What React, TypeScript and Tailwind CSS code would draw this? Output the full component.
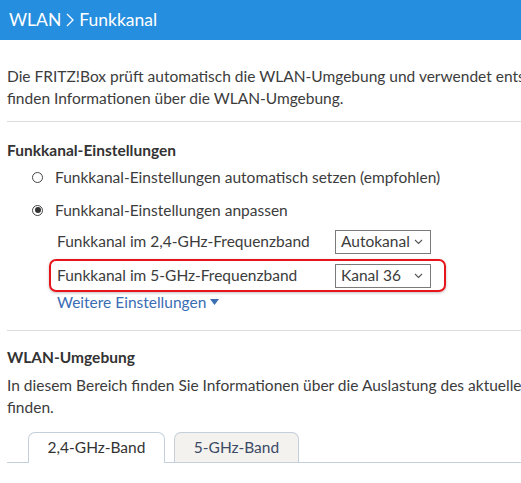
import React from "react";

const font = { fontFamily: "Lato, 'Liberation Sans', sans-serif" };

function Chevron() {
  return (
    <svg width="9" height="6" viewBox="0 0 9 6" className="flex-shrink-0">
      <polyline points="1,1 4.5,4.5 8,1" fill="none" stroke="#555" strokeWidth="1.1" />
    </svg>
  );
}

function Select({ value }: { value: string }) {
  return (
    <div className="w-[96px] h-[24px] border border-[#7a7a7a] bg-white flex items-center justify-between pl-[5px] pr-[7px] text-[15.5px] text-[#3c3c3c]">
      <span>{value}</span>
      <Chevron />
    </div>
  );
}

function Radio({ checked }: { checked?: boolean }) {
  return (
    <span className="w-[11px] h-[11px] rounded-full border border-[#444] flex items-center justify-center flex-shrink-0">
      {checked && <span className="w-[6px] h-[6px] rounded-full bg-[#333]" />}
    </span>
  );
}

export default function App() {
  return (
    <div className="w-[521px] h-[483px] overflow-hidden bg-white text-[#3c3c3c] text-[15.5px]" style={font}>
      {/* Title bar */}
      <div className="h-10 bg-[#268ede] flex items-center pl-[9px] gap-[5px] text-white text-[17.5px]">
        <span>WLAN</span>
        <svg width="8" height="14" viewBox="0 0 8 14">
          <polyline points="1,1 7,7 1,13" fill="none" stroke="white" strokeWidth="1.3" />
        </svg>
        <span>Funkkanal</span>
      </div>

      <div className="pl-[7px]">
        <div className="mt-[25px] leading-[22px] whitespace-nowrap">
          <p>Die FRITZ!Box prüft automatisch die WLAN-Umgebung und verwendet entsprechend einen geeigneten Funkkanal. Hier</p>
          <p>finden Informationen über die WLAN-Umgebung.</p>
        </div>

        <div className="mt-[12px] border-t border-[#dddddd]" />

        {/* Funkkanal-Einstellungen */}
        <h2 className="mt-[17px] leading-[22px] font-bold text-[#333]">Funkkanal-Einstellungen</h2>

        <div className="mt-[5px] pl-[25px] flex items-center gap-[12px] leading-[22px]">
          <Radio />
          <span>Funkkanal-Einstellungen automatisch setzen (empfohlen)</span>
        </div>
        <div className="mt-[11px] pl-[25px] flex items-center gap-[12px] leading-[22px]">
          <Radio checked />
          <span>Funkkanal-Einstellungen anpassen</span>
        </div>

        <div className="mt-[4px] ml-[42px] w-[397px] border-2 border-transparent rounded-[7px] flex items-center pl-[6px] pt-[3px] pb-[2px]">
          <span className="w-[278px]">Funkkanal im 2,4-GHz-Frequenzband</span>
          <Select value="Autokanal" />
        </div>
        <div className="mt-[1px] ml-[42px] w-[397px] border-2 border-[#e8141b] rounded-[7px] flex items-center pl-[6px] pt-[3px] pb-[2px] shadow-[0_1px_3px_rgba(0,0,0,0.25)]">
          <span className="w-[278px]">Funkkanal im 5-GHz-Frequenzband</span>
          <Select value="Kanal 36" />
        </div>

        <div className="ml-[50px] leading-[20px] text-[#3b6db3] flex items-center gap-[4px]">
          <span>Weitere Einstellungen</span>
          <svg width="9" height="6" viewBox="0 0 9 6">
            <polygon points="0,0 9,0 4.5,6" fill="#3b6db3" />
          </svg>
        </div>

        <div className="mt-[18px] border-t border-[#dddddd]" />

        {/* WLAN-Umgebung */}
        <h2 className="mt-[15px] leading-[22px] font-bold text-[#333]">WLAN-Umgebung</h2>
        <div className="mt-[6px] leading-[22px] whitespace-nowrap">
          <p>In diesem Bereich finden Sie Informationen über die Auslastung des aktuellen Funkkanals und welche WLAN-Netze zu</p>
          <p>finden.</p>
        </div>

        <div className="mt-[14px] flex items-end gap-[9px] pl-[21px] border-b border-[#c3cfdb] h-[31px]">
          <div className="w-[137px] h-[31px] -mb-px bg-white border border-b-0 border-[#c3cfdb] rounded-t-[7px] flex items-center justify-center text-[#333]">
            2,4-GHz-Band
          </div>
          <div className="w-[125px] h-[30px] bg-[#f3f2ef] border border-b-0 border-[#c3cfdb] rounded-t-[7px] flex items-center justify-center text-[#3c4a66]">
            5-GHz-Band
          </div>
        </div>
      </div>
    </div>
  );
}
